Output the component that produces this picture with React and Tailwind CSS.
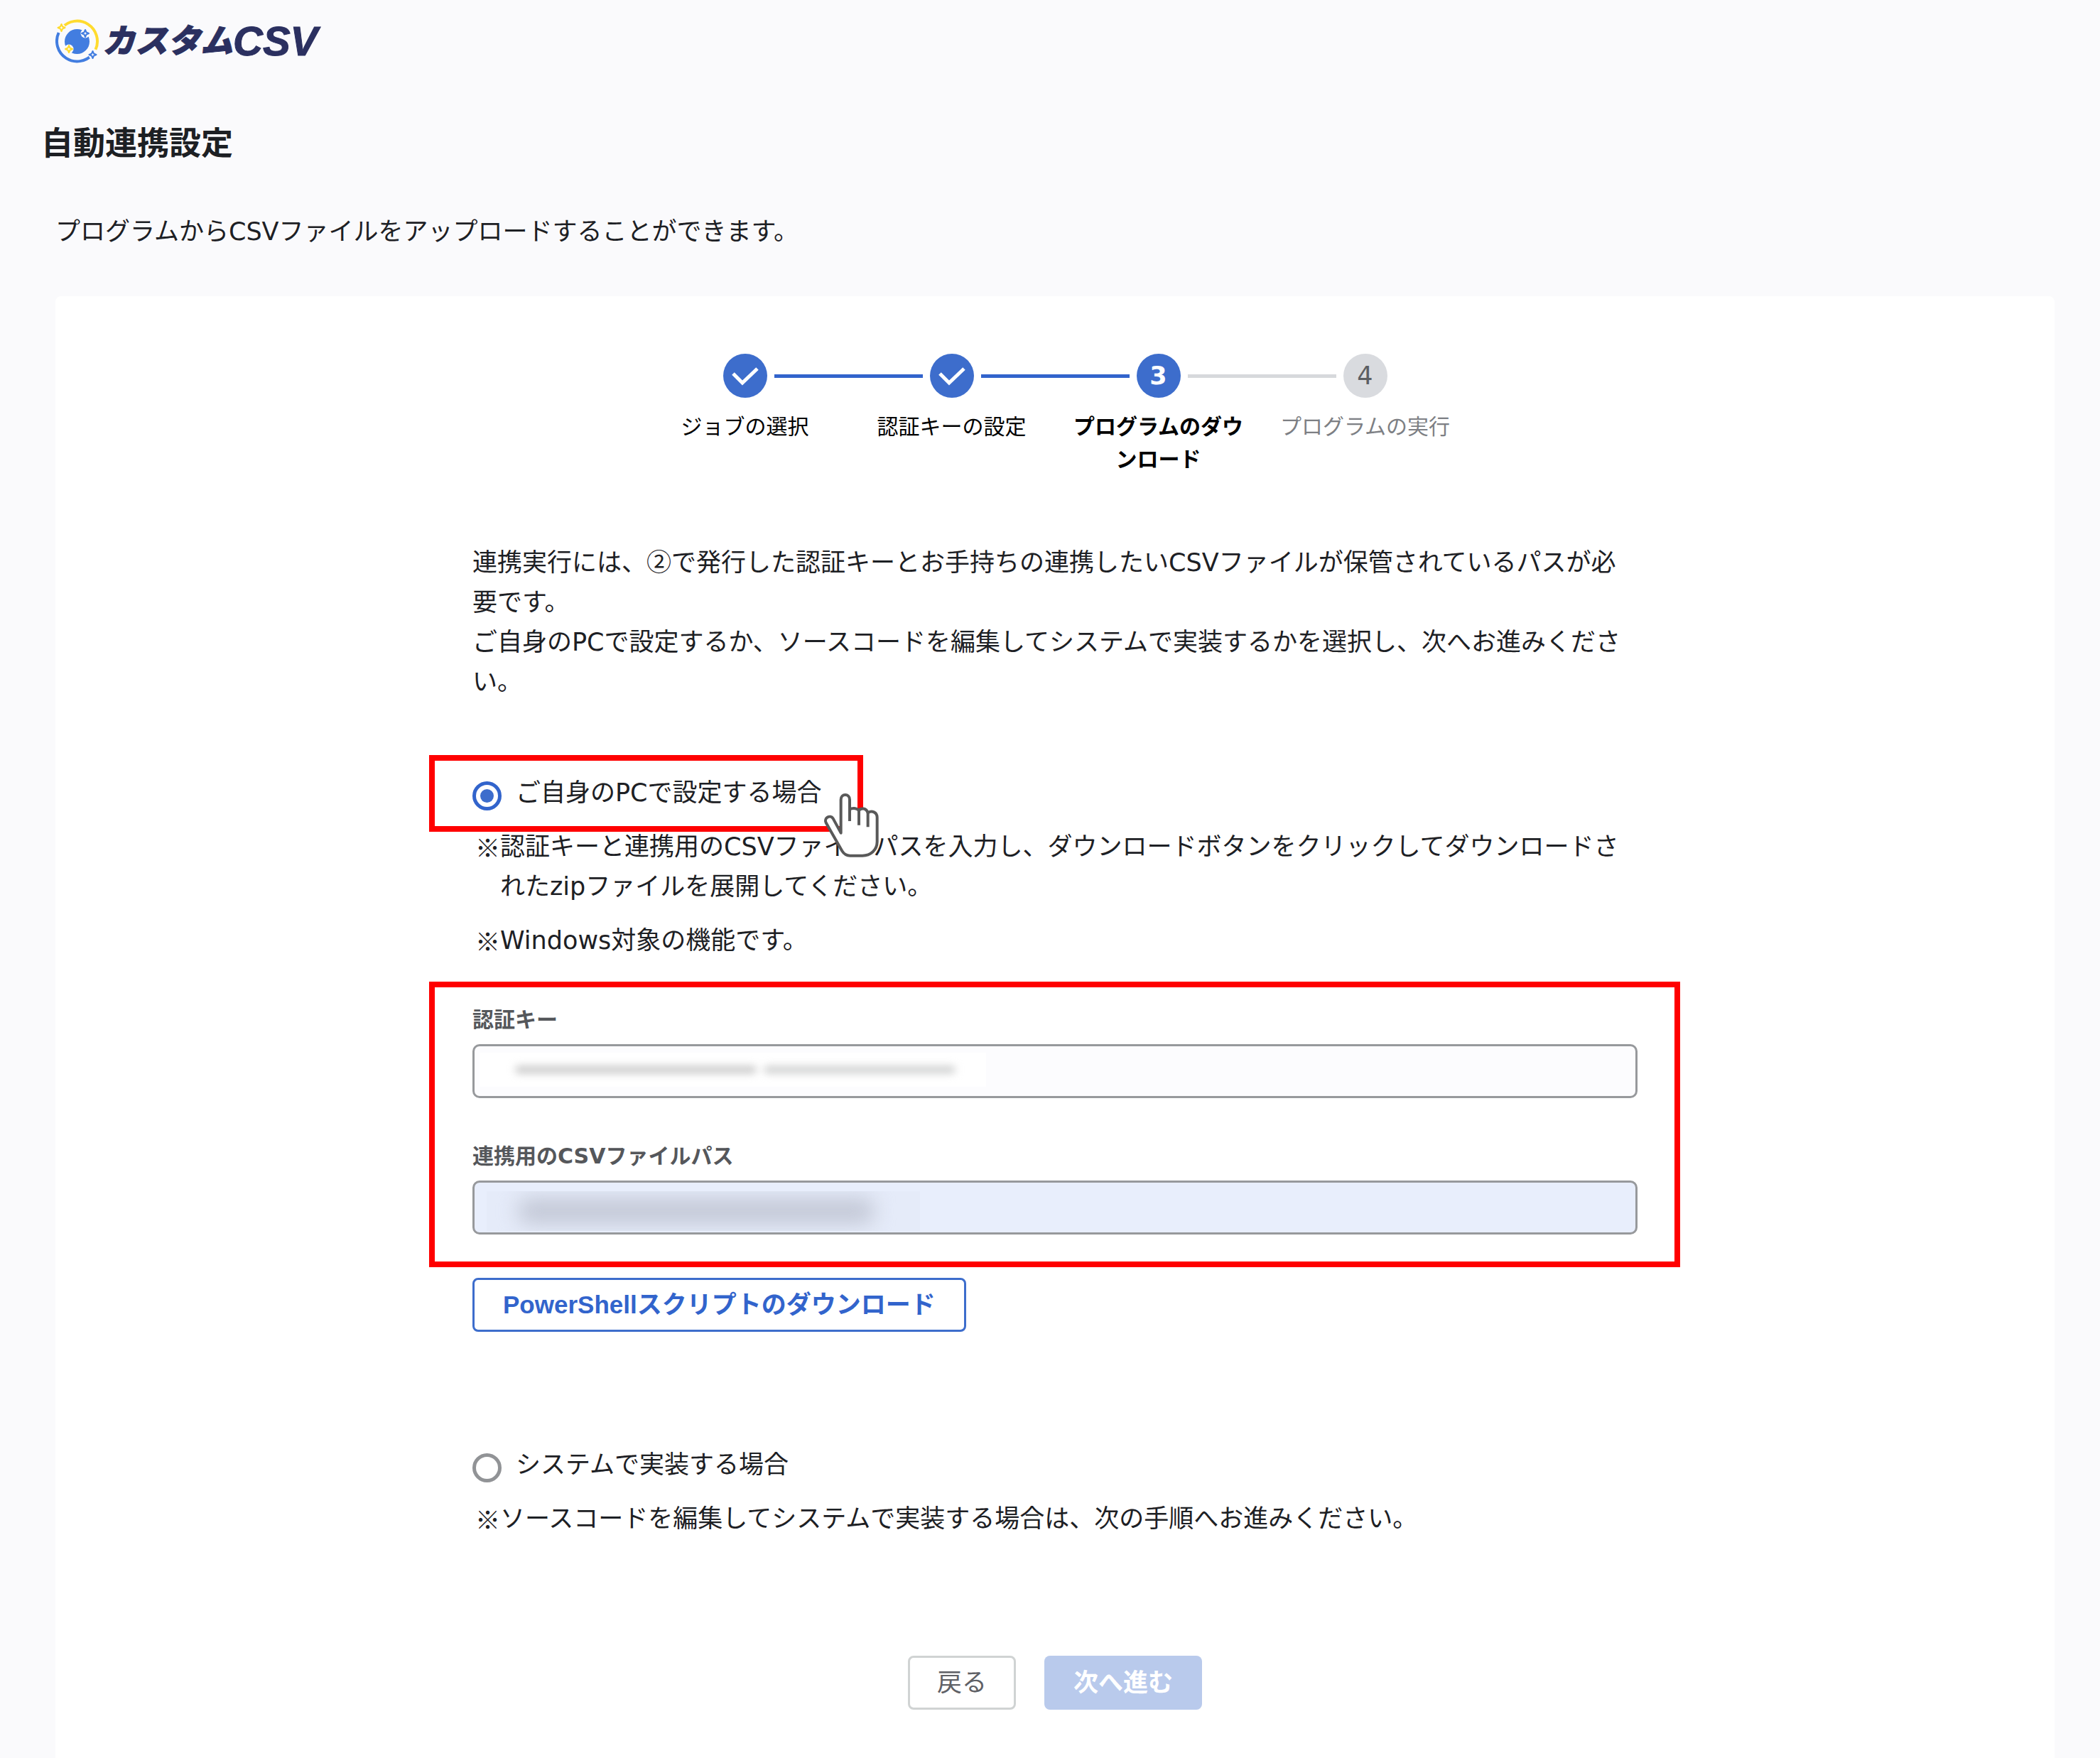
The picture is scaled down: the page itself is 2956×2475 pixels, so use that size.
import React, { useState } from "react";

// Inline icons to avoid external dependency issues
const LogoMark = (props) => (
  <svg {...props} viewBox="8 12 62 62" fill="none">
    <circle cx="38.5" cy="43.5" r="17.5" fill="#427de0" />
    <path d="M17 24.4A28.5 28.5 0 0 1 64.5 54.8" stroke="#ffdb2e" strokeWidth="4" />
    <path d="M60 61.6A28.5 28.5 0 0 1 12.6 31" stroke="#427de0" strokeWidth="4" />
    <g fill="#fafafc">
      <circle cx="16.5" cy="24" r="5.5" />
      <circle cx="50" cy="32" r="6.5" />
      <circle cx="27" cy="54" r="6.5" />
      <circle cx="60.5" cy="62" r="6" />
    </g>
    <g strokeWidth="2" strokeLinejoin="round">
      <path d="M16.5 19l1.500 3.500 3.500 1.500-3.500 1.500-1.500 3.500-1.500-3.500-3.500-1.500 3.500-1.500z" stroke="#ffdb2e" />
      <path d="M27 49l1.500 3.500 3.500 1.500-3.500 1.500-1.500 3.500-1.500-3.500-3.500-1.500 3.500-1.500z" stroke="#ffdb2e" />
      <path d="M50 27l1.500 3.500 3.500 1.500-3.500 1.500-1.500 3.500-1.500-3.500-3.500-1.500 3.500-1.500z" stroke="#427de0" />
      <path d="M60.500 57l1.500 3.500 3.500 1.500-3.500 1.500-1.500 3.500-1.500-3.500-3.500-1.500 3.500-1.500z" stroke="#427de0" />
    </g>
  </svg>
);

const IconCheck = (props) => (
  <svg {...props} viewBox="0 0 62 62" fill="none" stroke="currentColor">
    <path strokeWidth="5" d="M14 28L27 41L48 21" />
  </svg>
);

const HandPointer = (props) => (
  <svg {...props} viewBox="0 0 330 330" fill="none" stroke="#595959" strokeWidth="12" strokeLinejoin="round">
    <path
      fill="#fff"
      d="M101 203V62C101 35 138 35 138 62V104C148 96 168 97 177 108C186 96 208 97 215 118C232 106 254 116 254 138V240C254 275 226 299 192 299H140C124 299 114 292 106 279L38 160C28 140 56 124 68 142L101 203Z"
    />
    <path d="M138 100V153M177 104V170M215 114V178" />
  </svg>
);

const steps = [
  { label: "ジョブの選択", status: "done" },
  { label: "認証キーの設定", status: "done" },
  { label: "プログラムのダウンロード", status: "current" },
  { label: "プログラムの実行", status: "todo" },
];

const circleStyles = {
  done: "bg-[#3d6dcc] text-white",
  current: "bg-[#3d6dcc] text-white font-bold",
  todo: "bg-[#d9dbdf] text-[#5c5f63]",
};

const labelStyles = {
  done: "text-black",
  current: "text-black font-bold",
  todo: "text-[#7d7f84]",
};

const connectorColor = (index) => {
  if (index < 0 || index >= steps.length - 1) return "bg-transparent";
  return steps[index].status === "done" ? "bg-[#3264cc]" : "bg-[#d7d9dc]";
};

const Stepper = () => (
  <ol className="mx-auto flex max-w-[1164px]">
    {steps.map((step, index) => (
      <li
        key={step.label}
        className="flex flex-1 flex-col items-center"
        aria-current={step.status === "current" ? "step" : undefined}
      >
        <div className="flex w-full items-center gap-[10px]">
          <span className={`h-[5px] flex-1 ${connectorColor(index - 1)}`} />
          <span
            className={`flex size-[62px] items-center justify-center rounded-full text-[35px] leading-[56px] ${circleStyles[step.status]}`}
          >
            {step.status === "done" ? <IconCheck className="size-full" /> : index + 1}
          </span>
          <span className={`h-[5px] flex-1 ${connectorColor(index)}`} />
        </div>
        <span className={`mt-[18px] px-[20px] text-center text-[30px] leading-[46px] ${labelStyles[step.status]}`}>
          {step.label}
        </span>
      </li>
    ))}
  </ol>
);

const RadioOption = ({ id, checked, onChange, children }) => (
  <div className="flex items-start gap-[20px]">
    <input
      type="radio"
      name="method"
      id={id}
      checked={checked}
      onChange={onChange}
      className="mt-3 size-[41px] shrink-0 appearance-none rounded-full border-[5px] border-[#919396] bg-white bg-clip-content p-[6px] checked:border-[#3264cc] checked:bg-[#3d6dcc]"
    />
    <label htmlFor={id}>{children}</label>
  </div>
);

const Note = ({ children }) => (
  <p className="mt-[20px] flex pl-1">
    <span className="w-[35px] shrink-0 font-['Noto_Sans_CJK_JP',sans-serif]">※</span>
    <span>{children}</span>
  </p>
);

const TextField = ({ id, label, inputClass, children }) => (
  <div>
    <label htmlFor={id} className="block text-[30px] font-bold leading-[46px] text-[#55575b]">
      {label}
    </label>
    <div className="relative mt-[11px]">
      <input
        type="text"
        id={id}
        className={`block h-[76px] w-full rounded-[10px] border-[3px] border-[#97999c] px-10 ${inputClass}`}
      />
      {children}
    </div>
  </div>
);

const App = () => {
  const [method, setMethod] = useState("pc");

  return (
    <div className="flex min-h-screen flex-col bg-[#fafafc] pl-[78px] pr-[64px] font-['DejaVu_Sans','Noto_Sans_CJK_JP',sans-serif] text-[35px] leading-[56px] text-[#1d2024]">
      <header className="flex items-center gap-1 pt-[27px]">
        <LogoMark className="size-[62px]" />
        <span className="flex items-center font-['Liberation_Sans','Noto_Sans_CJK_JP',sans-serif] font-black italic leading-[60px] text-[#2b3060] [-webkit-text-stroke:1px_#2b3060]">
          <span className="text-[46px]">カスタム</span>
          <span className="text-[58px]">CSV</span>
        </span>
      </header>

      <h1 className="-ml-[20px] mt-[86px] text-[45px] font-bold">自動連携設定</h1>
      <p className="mt-[67px]">プログラムからCSVファイルをアップロードすることができます。</p>

      <main className="mt-[63px] flex-1 rounded-t-lg bg-white pt-[81px] pb-[68px]">
        <Stepper />

        <form className="mx-auto mt-[91px] max-w-[1640px]" onSubmit={(e) => e.preventDefault()}>
          <p>
            連携実行には、<span className="font-['Noto_Sans_CJK_JP',sans-serif]">②</span>
            で発行した認証キーとお手持ちの連携したいCSVファイルが保管されているパスが必要です。
            <br />
            ご自身のPCで設定するか、ソースコードを編集してシステムで実装するかを選択し、次へお進みください。
          </p>

          <div className="relative mt-[100px]">
            <RadioOption id="method-pc" checked={method === "pc"} onChange={() => setMethod("pc")}>
              ご自身のPCで設定する場合
            </RadioOption>
            {/* Highlight frame and pointer */}
            <div className="pointer-events-none absolute -left-[61px] -top-[25px] h-[108px] w-[611px] border-8 border-[#ff0000]" />
            <HandPointer className="pointer-events-none absolute left-[485px] top-[17px] z-10 size-[110px]" />
          </div>
          <Note>
            認証キーと連携用のCSVファイルパスを入力し、ダウンロードボタンをクリックしてダウンロードされたzipファイルを展開してください。
          </Note>
          <Note>Windows対象の機能です。</Note>

          <div className="relative mt-[61px] flex flex-col gap-[59px]">
            <TextField id="auth-key" label="認証キー" inputClass="bg-[#fcfcfe]">
              <div className="pointer-events-none absolute left-[10px] top-[12px] flex h-[48px] w-[713px] items-center gap-[10px] overflow-hidden bg-white pl-[50px]">
                <span className="h-[10px] w-[340px] rounded-full bg-[#c6c6c6] blur-[6px]" />
                <span className="h-[10px] w-[270px] rounded-full bg-[#cccdcd] blur-[6px]" />
              </div>
            </TextField>
            <TextField id="csv-path" label="連携用のCSVファイルパス" inputClass="bg-[#e8eefc]">
              <div className="pointer-events-none absolute left-[20px] top-[15px] flex h-[56px] w-[610px] items-center overflow-hidden bg-[#e5ebf9] pl-[45px]">
                <span className="h-[36px] w-[500px] rounded-[12px] bg-[#c3c8d6] blur-[14px]" />
              </div>
            </TextField>
            <div className="pointer-events-none absolute -bottom-[46px] -left-[61px] -right-[60px] -top-[31px] border-8 border-[#ff0000]" />
          </div>

          <button
            type="button"
            className="mt-[61px] block h-[76px] rounded-lg border-[3px] border-[#3d6dcc] bg-white px-[40px] font-['Liberation_Sans','Noto_Sans_CJK_JP',sans-serif] font-bold leading-[56px] text-[#3264cc]"
          >
            PowerShellスクリプトのダウンロード
          </button>

          <div className="mt-[159px]">
            <RadioOption id="method-system" checked={method === "system"} onChange={() => setMethod("system")}>
              システムで実装する場合
            </RadioOption>
          </div>
          <Note>ソースコードを編集してシステムで実装する場合は、次の手順へお進みください。</Note>

          <div className="mt-[165px] flex justify-center gap-[40px]">
            <button
              type="button"
              className="h-[76px] rounded-lg border-[3px] border-[#d0d3d3] bg-white px-[38px] text-[#5f6166]"
            >
              戻る
            </button>
            <button type="submit" disabled className="h-[76px] rounded-lg bg-[#b9caec] px-[41px] font-bold text-white">
              次へ進む
            </button>
          </div>
        </form>
      </main>
    </div>
  );
};

export default App;
